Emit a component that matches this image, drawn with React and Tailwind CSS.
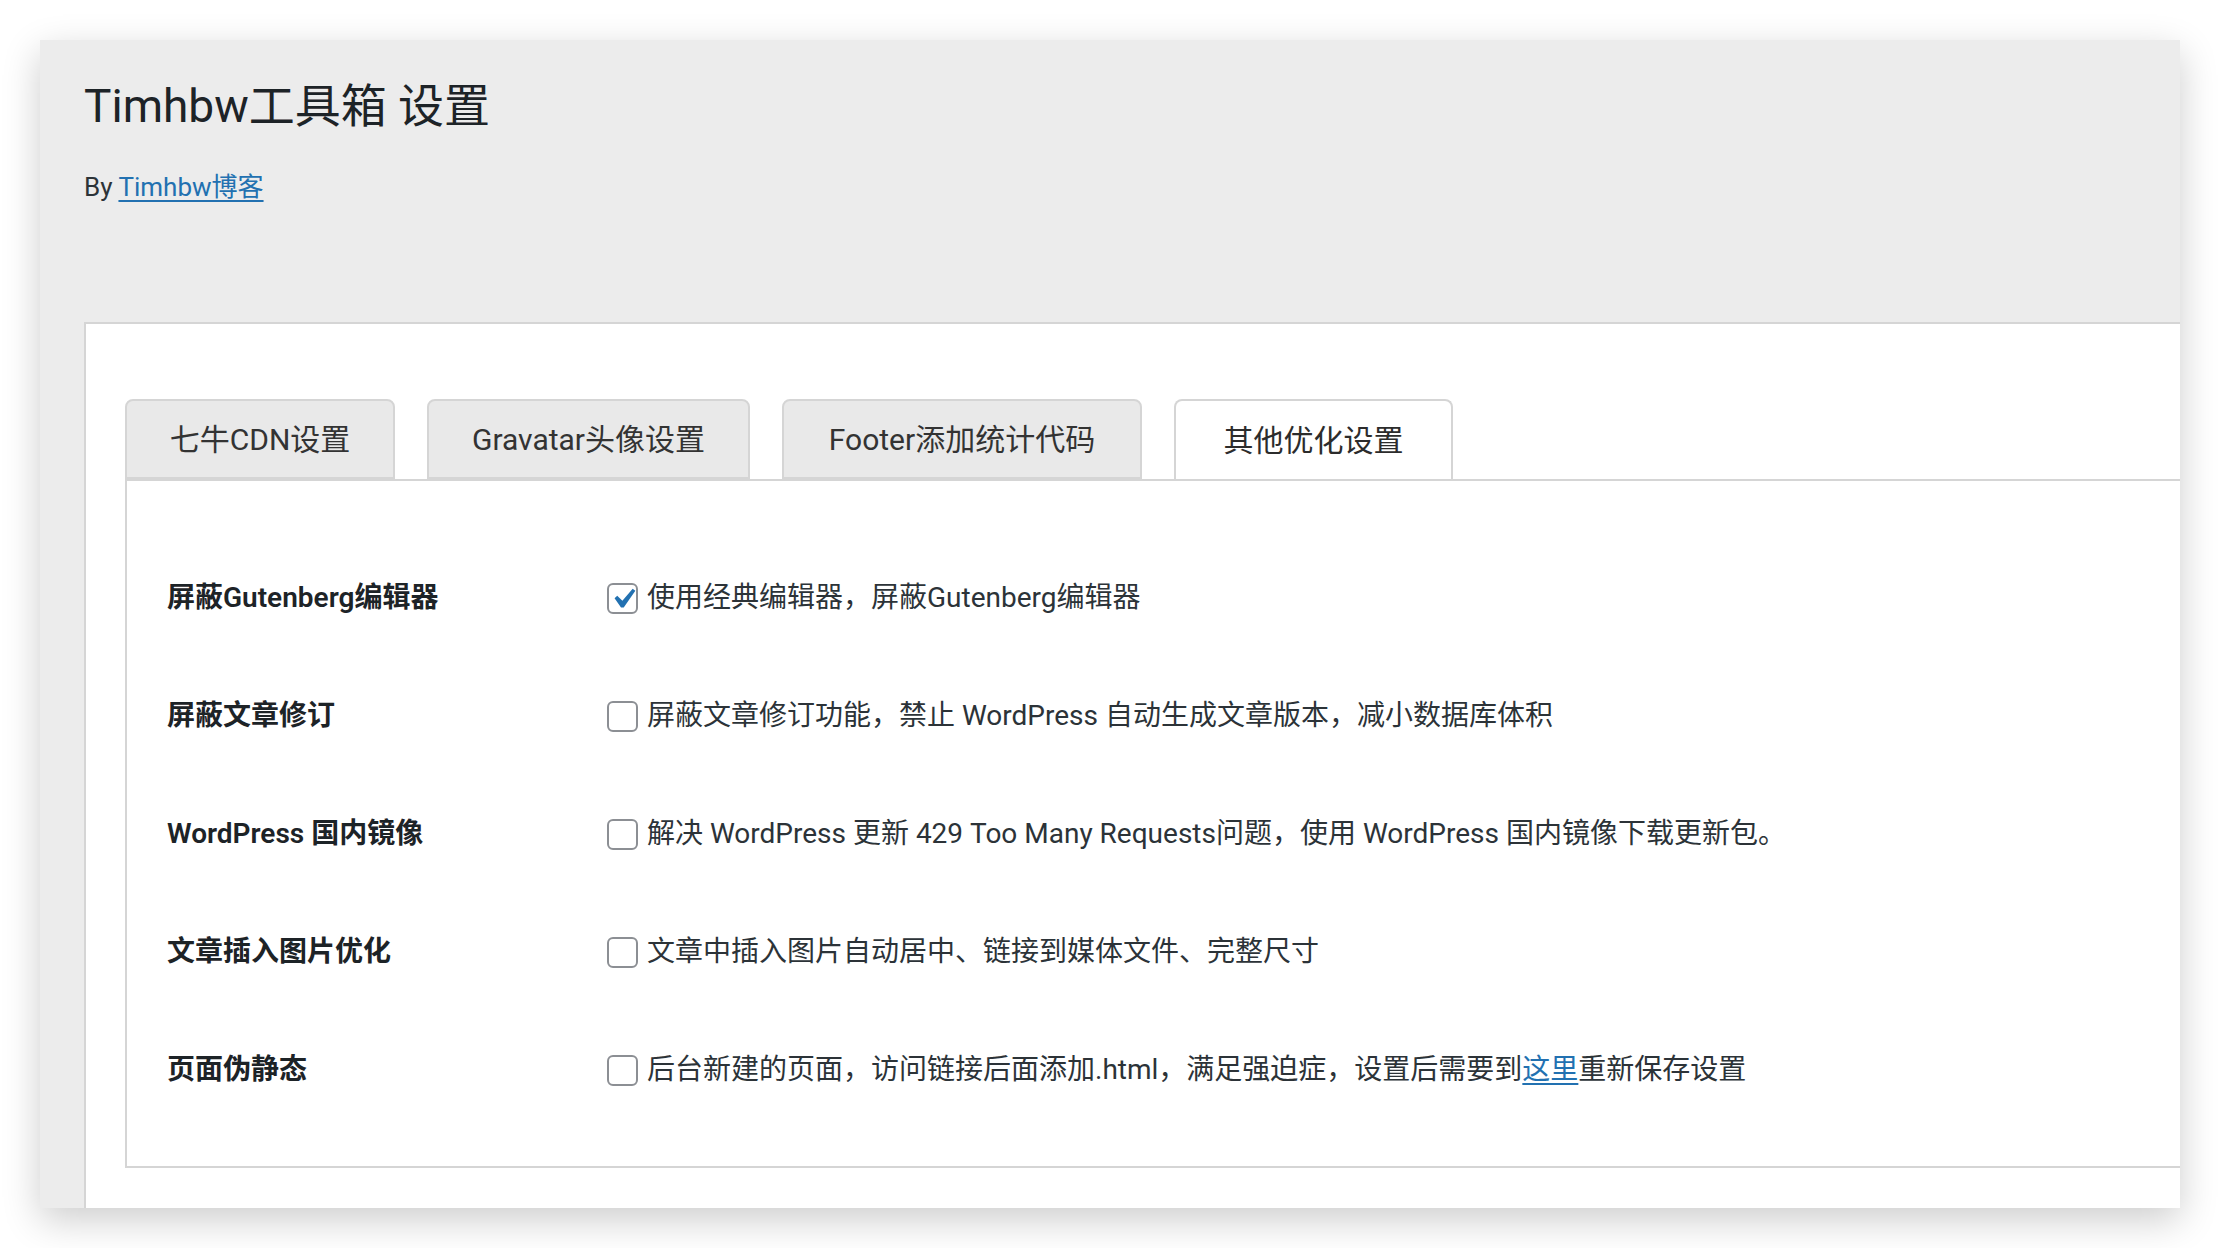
import React from "react";

function Check() {
  return (
    <svg viewBox="0 0 20 20" className="absolute -left-[6px] -top-[6px] h-[40px] w-[40px]">
      <path d="M14.83 4.89l1.34.94-5.81 8.38H9.02L5.78 9.67l1.34-1.25 2.57 2.4z" fill="#2271b1" />
    </svg>
  );
}

function Box({ checked }) {
  return (
    <span className="relative block h-[31px] w-[31px] shrink-0 rounded-[6px] border-2 border-[#8c8f94] bg-white">
      {checked && <Check />}
    </span>
  );
}

const rows = [
  { label: "屏蔽Gutenberg编辑器", text: "使用经典编辑器，屏蔽Gutenberg编辑器", checked: true },
  { label: "屏蔽文章修订", text: "屏蔽文章修订功能，禁止 WordPress 自动生成文章版本，减小数据库体积" },
  { label: "WordPress 国内镜像", text: "解决 WordPress 更新 429 Too Many Requests问题，使用 WordPress 国内镜像下载更新包。" },
  { label: "文章插入图片优化", text: "文章中插入图片自动居中、链接到媒体文件、完整尺寸" },
  { label: "页面伪静态", text: null },
];

const tabs = [
  { name: "七牛CDN设置", w: "w-[270px]" },
  { name: "Gravatar头像设置", w: "w-[323px]" },
  { name: "Footer添加统计代码", w: "w-[360px]" },
  { name: "其他优化设置", w: "w-[279px]", active: true },
];

export default function App() {
  return (
    <div className="h-[1248px] w-[2220px] bg-white p-[40px] font-[Roboto,'Noto_Sans_CJK_SC',sans-serif]">
      <div className="flex h-[1168px] w-[2140px] flex-col overflow-hidden bg-[#ececec] shadow-[0_12px_36px_rgba(0,0,0,0.2)]">
        <div className="pl-[44px]">
          <h1 className="mt-[36px] text-[46px] leading-[60px] font-normal text-[#1d2327]">Timhbw工具箱 设置</h1>
          <p className="mt-[33px] text-[26px] leading-[36px] text-[#2c3338]">
            By <a href="#" className="text-[#2271b1] underline underline-offset-[4px]">Timhbw博客</a>
          </p>
        </div>
        <div className="ml-[44px] mt-[117px] flex-1 border-l-2 border-t-2 border-[#d5d5d5] bg-white pl-[39px] pt-[75px]">
          <div className="flex gap-[32px]">
            {tabs.map((t) => (
              <div
                key={t.name}
                className={
                  t.active
                    ? `flex h-[80px] items-center justify-center rounded-t-[8px] border-2 border-b-0 border-[#d5d5d5] bg-white text-[30px] text-[#2c2c2c] ${t.w}`
                    : `flex h-[80px] items-center justify-center rounded-t-[8px] border-2 border-[#d5d5d5] bg-[#e9e9e9] text-[30px] text-[#333333] ${t.w}`
                }
              >
                {t.name}
              </div>
            ))}
          </div>
          <div className="h-[689px] border-2 border-r-0 border-[#d5d5d5] pl-[40px] pt-[58px]">
            {rows.map((r) => (
              <div key={r.label} className="flex h-[118px] items-center">
                <div className="w-[440px] shrink-0 text-[28px] font-semibold text-[#1d2327]">{r.label}</div>
                <div className="flex items-center gap-[9px] text-[28px] text-[#2c3338]">
                  <Box checked={r.checked} />
                  {r.text ? (
                    <span>{r.text}</span>
                  ) : (
                    <span>
                      后台新建的页面，访问链接后面添加.html，满足强迫症，设置后需要到
                      <a href="#" className="text-[#2271b1] underline underline-offset-[4px]">这里</a>
                      重新保存设置
                    </span>
                  )}
                </div>
              </div>
            ))}
          </div>
        </div>
      </div>
    </div>
  );
}
